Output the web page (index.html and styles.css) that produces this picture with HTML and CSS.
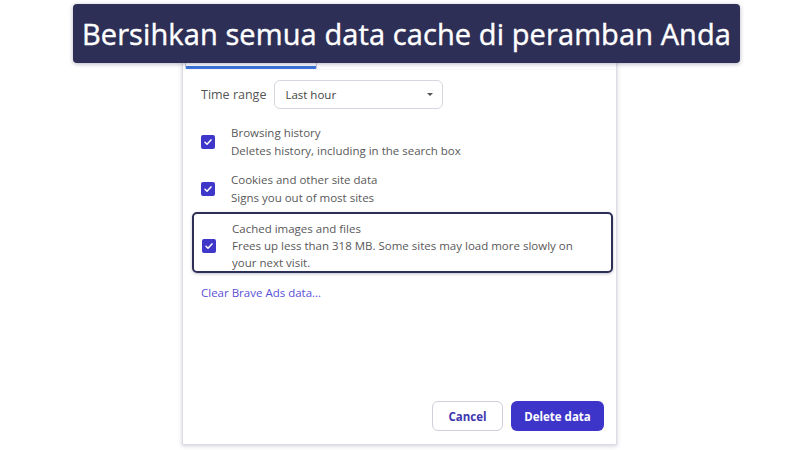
FILE: index.html
```html
<!DOCTYPE html>
<html lang="en">
<head>
    <meta charset="UTF-8">
    <meta name="viewport" content="width=device-width, initial-scale=1.0">
    <title>Clear browsing data</title>
    <link rel="stylesheet" href="styles.css">
</head>
<body>
  <div class="banner">Bersihkan semua data cache di peramban Anda</div>

  <div class="dialog">
    <div class="tabs">
      <div class="tab active"></div>
    </div>

    <div class="body">
      <div class="range">
        <span class="range-label">Time range</span>
        <div class="select">
          <span>Last hour</span>
          <span class="caret"></span>
        </div>
      </div>

      <div class="item">
        <span class="check"><svg viewBox="0 0 14 14" width="14" height="14"><path d="M4 7.3l2 2 4-4.4" fill="none" stroke="#fff" stroke-width="1.5" stroke-linecap="round" stroke-linejoin="round"/></svg></span>
        <div class="item-text">
          <div>Browsing history</div>
          <div>Deletes history, including in the search box</div>
        </div>
      </div>

      <div class="item">
        <span class="check"><svg viewBox="0 0 14 14" width="14" height="14"><path d="M4 7.3l2 2 4-4.4" fill="none" stroke="#fff" stroke-width="1.5" stroke-linecap="round" stroke-linejoin="round"/></svg></span>
        <div class="item-text">
          <div>Cookies and other site data</div>
          <div>Signs you out of most sites</div>
        </div>
      </div>

      <div class="item picked">
        <span class="check"><svg viewBox="0 0 14 14" width="14" height="14"><path d="M4 7.3l2 2 4-4.4" fill="none" stroke="#fff" stroke-width="1.5" stroke-linecap="round" stroke-linejoin="round"/></svg></span>
        <div class="item-text">
          <div>Cached images and files</div>
          <div>Frees up less than 318 MB. Some sites may load more slowly on your next visit.</div>
        </div>
      </div>

      <a class="ads-link" href="#">Clear Brave Ads data...</a>
    </div>

    <div class="actions">
      <button class="btn cancel" type="button">Cancel</button>
      <button class="btn delete" type="button">Delete data</button>
    </div>
  </div>
</body>
</html>
```

FILE: styles.css
```css
body{
    margin: 0;
    background-color: white;
    font-family: "Open Sans", "Liberation Sans", sans-serif;
    height: 450px;
    overflow: hidden;
    position: relative;
}
.banner{
    position: absolute;
    top: 4px;
    left: 73px;
    width: 667px;
    height: 59px;
    box-sizing: border-box;
    background-color: #2e2f56;
    color: white;
    border-radius: 4px;
    box-shadow: 0 1px 4px rgba(40, 40, 80, 0.35);
    font-size: 29px;
    line-height: 59px;
    text-align: center;
    letter-spacing: 0.1px;
    -webkit-text-stroke: 0.4px white;
    z-index: 2;
}
.dialog{
    margin: 20px 0 0 182px;
    width: 435px;
    height: 425px;
    box-sizing: border-box;
    border: 1px solid #dcdce6;
    border-top: none;
    box-shadow: 0 1px 4px rgba(60, 60, 110, 0.25);
    display: flex;
    flex-direction: column;
}
.tabs{
    height: 49px;
    padding-left: 2px;
    border-bottom: 1px dotted #ececf2;
    display: flex;
    align-items: flex-end;
}
.tab{
    width: 132px;
    height: 40px;
    box-sizing: border-box;
    border: 1px solid #c8c8d4;
    border-bottom: 3px solid #3a72d8;
    border-radius: 0 0 2px 2px;
}
.body{
    padding: 10px 0 0 18px;
    flex: 1;
}
.range{
    display: flex;
    align-items: center;
    gap: 8px;
    height: 29px;
}
.range-label{
    font-size: 12.5px;
    color: #555;
}
.select{
    width: 169px;
    height: 29px;
    box-sizing: border-box;
    border: 1px solid #d6d6de;
    border-radius: 6px;
    display: flex;
    align-items: center;
    justify-content: space-between;
    padding: 0 9px 0 10px;
    font-size: 11.5px;
    color: #444;
}
.caret{
    width: 0;
    height: 0;
    border-left: 3px solid transparent;
    border-right: 3px solid transparent;
    border-top: 3px solid #555;
}
.item{
    display: flex;
    align-items: center;
    gap: 16px;
    font-size: 11.5px;
    line-height: 17.5px;
    color: #595959;
    margin-top: 15px;
}
.item + .item{
    margin-top: 12px;
}
.item.picked{
    margin: 6px 0 0 -9px;
    width: 421px;
    box-sizing: border-box;
    padding: 6px 30px 0 8px;
    line-height: 17px;
    border: 2px solid #2e2f56;
    border-radius: 5px;
    box-shadow: 0 1px 3px rgba(40, 40, 80, 0.3);
}
.check{
    width: 14px;
    height: 14px;
    border-radius: 2px;
    background-color: #3f37c9;
    display: flex;
    flex-shrink: 0;
}
.ads-link{
    display: block;
    margin-top: 12px;
    font-size: 11.5px;
    color: #5a50d8;
    text-decoration: none;
}
.actions{
    display: flex;
    justify-content: flex-end;
    gap: 8px;
    padding: 0 12px 13px 0;
}
.btn{
    height: 30px;
    border-radius: 6px;
    font-family: inherit;
    font-size: 11.5px;
    font-weight: 700;
    cursor: pointer;
}
.cancel{
    width: 71px;
    background-color: white;
    border: 1px solid #cfd0dc;
    color: #3d36b0;
}
.delete{
    width: 93px;
    background-color: #3d35c9;
    border: none;
    color: white;
}
```
